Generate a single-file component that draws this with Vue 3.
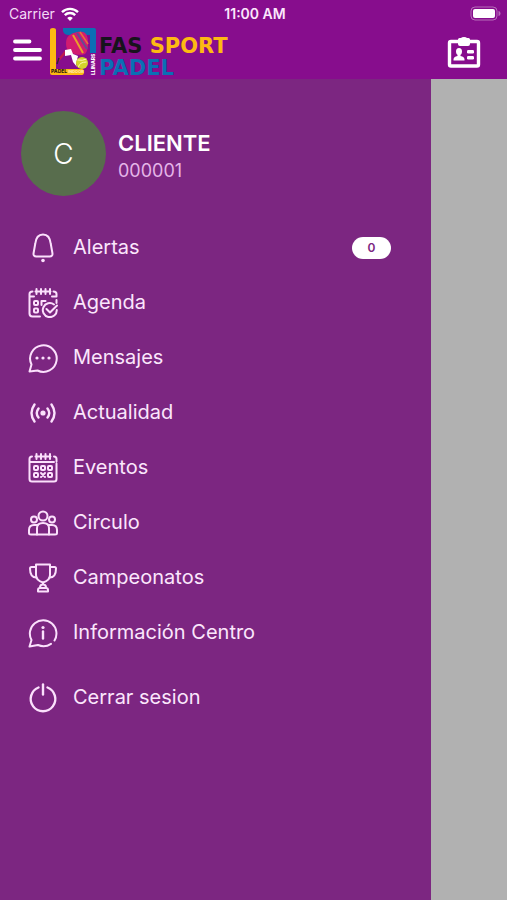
<script setup>
import { ref } from 'vue'

const alerts = ref(0)
const menuOpen = ref(true)

const items = [
  { id: 'alertas', label: 'Alertas' },
  { id: 'agenda', label: 'Agenda' },
  { id: 'mensajes', label: 'Mensajes' },
  { id: 'actualidad', label: 'Actualidad' },
  { id: 'eventos', label: 'Eventos' },
  { id: 'circulo', label: 'Circulo' },
  { id: 'campeonatos', label: 'Campeonatos' },
  { id: 'informacion', label: 'Información Centro' },
  { id: 'salir', label: 'Cerrar sesion' },
]
</script>

<template>
  <div class="app">
    <header class="header">
      <div class="status">
        <div class="carrier">
          <span>Carrier</span>
          <svg width="18" height="14" viewBox="0 0 18 14" fill="none" stroke="#fff" stroke-width="2.4">
            <path d="M1 5.2a11.4 11.4 0 0 1 16 0" />
            <path d="M3.8 8.2a7.4 7.4 0 0 1 10.4 0" />
            <path d="M9 14 6.2 11a4 4 0 0 1 5.6 0z" fill="#fff" stroke="none" />
          </svg>
        </div>
        <span class="clock">11:00 AM</span>
        <div class="battery">
          <svg width="31" height="15" viewBox="0 0 31 15">
            <rect x="1" y="1" width="26" height="13" rx="4" fill="none" stroke="#fff" stroke-opacity=".4" />
            <rect x="3" y="3" width="22" height="9" rx="2" fill="#fff" />
            <path d="M28.5 5v5c1.3-.3 2-1.3 2-2.5s-.7-2.2-2-2.5z" fill="#fff" fill-opacity=".4" />
          </svg>
        </div>
      </div>

      <div class="bar">
        <button class="icon-button menu-button" aria-label="Menu" @click="menuOpen = !menuOpen">
          <svg width="30" height="24" viewBox="0 0 30 24" stroke="#fff" stroke-width="3.8" stroke-linecap="round">
            <path d="M3 3.5H17.5M3 12H28M3 20.5H28" />
          </svg>
        </button>

        <a class="brand" href="#">
          <svg class="emblem" width="48" height="48" viewBox="0 0 48 48">
            <path d="M1 2q0-2 3-2t3 2v39h26q2 0 2 3t-2 3H3q-2 0-2-2z" fill="#fdb913" />
            <path d="M14 0h31q2 0 2 2v23h-6V7H20q-5 0-6-4z" fill="#0b6fb5" />
            <path d="M18 22 8 34" stroke="#bf194e" stroke-width="2.5" />
            <path d="M10 30l-2 6" stroke="#31213d" stroke-width="1.5" />
            <path d="M18 10C21 5 29 3 34 4c4 1 5 6 5 11s-1 9-3 11c-5 2-11 0-14-1-5-2-6-10-4-15z" fill="#d11c70" />
            <path d="M24 7l10 18" stroke="#e8a128" stroke-width="2" fill="none" />
            <path d="M28 5l10 16" stroke="#654c91" stroke-width="2" fill="none" />
            <path d="M31 4l8 12" stroke="#e8703a" stroke-width="1.5" fill="none" />
            <path d="M16 22l6-1 2 5 5 2-2 8 1 3-4-5-2-7-6 1z" fill="#fff" />
            <circle cx="33" cy="35" r="6" fill="#d4d52b" />
            <path d="M28.5 32q5 1 9-1M29.5 39q1-5 8-5" stroke="#fff7b0" fill="none" />
            <text class="emblem-text" x="2" y="45">PADEL</text>
            <text class="emblem-text light" x="19" y="45">INDOOR</text>
            <text class="emblem-text side" transform="translate(46 47) rotate(-90)">LLINARS</text>
          </svg>
          <span class="wordmark">
            <span><span class="fas">FAS</span> <span class="sport">SPORT</span></span>
            <span class="padel">PADEL</span>
          </span>
        </a>

        <button class="icon-button card-button" aria-label="Carnet">
          <svg width="34" height="31" viewBox="0 0 34 31" fill="#fff">
            <rect x="2.5" y="4.5" width="29" height="24.5" rx="1.5" fill="none" stroke="#fff" stroke-width="3.4" />
            <path d="M12.5 1H14q.8-1 3-1t3 1h1.500q1.500 0 1.500 1.500V7q0 2-2 2h-8q-2 0-2-2V2.500Q11 1 12.500 1z" />
            <ellipse cx="12" cy="14.5" rx="3" ry="3.5" />
            <path d="M10.500 16h3v3q4 .5 4 3.500v1H6.500v-1q0-3 4-3.500z" />
            <rect x="20" y="13" width="7" height="3.5" rx="1.2" />
            <rect x="20" y="19" width="7" height="3.5" rx="1.2" />
          </svg>
        </button>
      </div>
    </header>

    <div class="body">
      <aside v-if="menuOpen" class="drawer">
        <div class="profile">
          <div class="avatar">C</div>
          <div class="client">
            <div class="name">CLIENTE</div>
            <div class="number">000001</div>
          </div>
        </div>

        <nav class="menu">
          <a v-for="item in items" :key="item.id" class="item" :class="item.id" href="#">
            <svg class="item-icon" width="30" height="30" viewBox="0 0 30 30">
              <g v-if="item.id === 'alertas'">
                <path d="M15 1.500C9.500 1.500 7.700 6 7.200 11l-1.600 9c-.4 2.500.7 3.500 2.700 3.500h13.400c2 0 3.100-1 2.700-3.500l-1.600-9C22.300 6 20.500 1.500 15 1.500z" />
                <circle class="solid" cx="15" cy="27.5" r="1.8" />
              </g>
              <g v-else-if="item.id === 'agenda'">
                <path d="M12 28.500H4.500q-3 0-3-3V6q0-2.500 3-2.500M25.500 3.500q3 0 3 2.500v2.500M28.500 12v3M1.500 8.500H6M24 8.500h4.500M7.500 3.500h15" />
                <path d="M8.500 1v5M13 1v5M17.500 1v5M22 1v5" />
                <rect x="6" y="13" width="4" height="4" rx="1" />
                <rect x="6" y="20.500" width="4" height="4" rx="1" />
                <path d="M13.500 17v-4h4" />
                <path d="M26 16.500A7 7 0 1 0 28.800 22M18.500 21l3.500 3.500 7-7" />
              </g>
              <g v-else-if="item.id === 'mensajes'">
                <path d="M3.500 21.500A13.300 13.300 0 1 1 9.500 27.500L1.500 28.500z" />
                <circle class="solid" cx="9" cy="15" r="1.6" />
                <circle class="solid" cx="15" cy="15" r="1.6" />
                <circle class="solid" cx="21" cy="15" r="1.6" />
              </g>
              <g v-else-if="item.id === 'actualidad'" class="bold">
                <circle class="solid" cx="15" cy="15" r="2.6" />
                <path d="M10.500 10.500q-3.500 4.500 0 9M19.500 10.500q3.500 4.500 0 9M6.500 6.500q-6 8.500 0 17M23.500 6.500q6 8.500 0 17" />
              </g>
              <g v-else-if="item.id === 'eventos'">
                <path d="M28.500 10.500V26q0 2.500-2.500 2.500H4q-2.500 0-2.500-2.500V6Q1.500 3.500 4 3.500M26 3.500q2.500 0 2.500 2.500v2.500M7.500 3.500h15M1.500 9H26" />
                <path d="M8.500 1v5M13 1v5M17.500 1v5M22 1v5" />
                <rect x="6" y="13" width="4" height="4" rx="1" />
                <rect x="13" y="13" width="4" height="4" rx="1" />
                <rect x="20" y="13" width="4" height="4" rx="1" />
                <rect x="6" y="20" width="4" height="4" rx="1" />
                <path d="M13 20l4 4M17 20l-4 4" />
                <rect x="20" y="20" width="4" height="4" rx="1" />
              </g>
              <g v-else-if="item.id === 'circulo'">
                <circle cx="15" cy="8" r="4.500" />
                <circle cx="6" cy="11.500" r="3" />
                <circle cx="24" cy="11.500" r="3" />
                <path d="M9 26.500V20q0-5 6-5t6 5v6.500" />
                <path d="M9.500 17H6q-5 0-5 5V25q0 1.500 2 1.500h24q2 0 2-1.500v-3q0-5-5-5h-3.500" />
              </g>
              <g v-else-if="item.id === 'campeonatos'">
                <path d="M8 1.500h14V12c0 4-3.500 6.500-7 7.500-3.500-1-7-3.500-7-7.500z" />
                <path d="M8 4H3.500Q2 4 2 5.500c0 5 1 9 6.500 9M22 4h4.500Q28 4 28 5.500c0 5-1 9-6.500 9" />
                <path d="M15 19.500v2M12 24.500q0-3 3-3t3 3M10 28.500v-1.500q0-2 2-2h6q2 0 2 2v1.500z" />
              </g>
              <g v-else-if="item.id === 'informacion'">
                <path d="M23 25.800q-6 4-13 1.200L1.500 28.500l2-6.500A13.300 13.300 0 1 1 26.500 22.500" />
                <circle class="solid" cx="15" cy="9.5" r="1.6" />
                <path class="thick" d="M15 13.500v7" />
              </g>
              <g v-else>
                <path class="thick" d="M10.500 4.500a12.300 12.300 0 1 0 9 0" />
                <path class="thick" d="M15 1.500v10" />
              </g>
            </svg>
            <span class="label">{{ item.label }}</span>
            <span v-if="item.id === 'alertas'" class="badge">{{ alerts }}</span>
          </a>
        </nav>
      </aside>
      <div class="overlay" @click="menuOpen = false"></div>
    </div>
  </div>
</template>

<style>
body {
  margin: 0;
}
</style>

<style scoped>
.app {
  display: flex;
  flex-direction: column;
  min-height: 100vh;
  font-family: Inter, 'Open Sans', sans-serif;
  color: #fbe6fc;
}

.header {
  background: #870d8d;
  color: #fff;
}

.status {
  display: grid;
  grid-template-columns: 1fr auto 1fr;
  align-items: center;
  height: 27px;
  padding: 0 6px 0 9px;
  font-size: 14px;
}

.carrier {
  display: flex;
  align-items: center;
  gap: 6px;
  color: #f3daf5;
}

.clock {
  color: #fbe6fc;
  font-size: 14px;
  font-weight: 600;
}

.battery {
  display: flex;
  justify-content: flex-end;
}

.bar {
  display: flex;
  align-items: center;
  height: 52px;
  padding: 0 26px 2px 12px;
  box-sizing: border-box;
}

.icon-button {
  display: flex;
  padding: 0;
  border: 0;
  background: none;
  cursor: pointer;
}

.menu-button {
  padding-bottom: 4px;
}

.card-button {
  margin-left: auto;
}

.brand {
  display: flex;
  align-items: center;
  gap: 2px;
  margin-left: 7px;
  text-decoration: none;
}

.emblem-text {
  font-size: 5px;
  font-weight: 800;
  fill: #30200c;
}

.emblem-text.light {
  fill: #ffe9a8;
  font-size: 4px;
}

.emblem-text.side {
  fill: #fff;
}

.wordmark {
  display: flex;
  flex-direction: column;
  padding-top: 10px;
  font-family: 'DejaVu Sans', sans-serif;
  font-size: 21px;
  font-weight: 700;
  line-height: 22px;
  white-space: nowrap;
}

.fas {
  color: #17131c;
}

.sport {
  color: #fdb913;
}

.padel {
  color: #0b6fb5;
}

.body {
  display: flex;
  flex: 1;
}

.drawer {
  width: 85%;
  box-sizing: border-box;
  padding: 32px 0 24px;
  background: #7c2681;
}

.overlay {
  flex: 1;
  background: #b1b1b1;
}

.profile {
  display: flex;
  align-items: center;
  gap: 12px;
  padding-left: 21px;
}

.avatar {
  display: flex;
  align-items: center;
  justify-content: center;
  width: 85px;
  height: 85px;
  border-radius: 50%;
  background: #586d4d;
  color: #fff;
  font-size: 28px;
  font-weight: 300;
}

.client {
  padding-top: 7px;
}

.name {
  color: #fff;
  font-size: 22px;
  font-weight: 600;
  line-height: 28px;
}

.number {
  color: #e5b5e8;
  font-size: 18px;
  line-height: 28px;
}

.menu {
  display: flex;
  flex-direction: column;
  margin-top: 24px;
}

.item {
  display: flex;
  align-items: center;
  height: 55px;
  padding: 0 40px 0 28px;
  color: inherit;
  font-size: 20px;
  text-decoration: none;
}

.item.salir {
  margin-top: 10px;
}

.item-icon {
  margin-right: 15px;
  fill: none;
  stroke: #fbe0fc;
  stroke-width: 2;
  stroke-linecap: round;
  stroke-linejoin: round;
}

.label {
  padding-bottom: 1px;
}

.bold,
.thick {
  stroke-width: 2.4;
}

.solid {
  fill: #fbe0fc;
  stroke: none;
}

.badge {
  width: 39px;
  margin-left: auto;
  border-radius: 11px;
  background: #fff;
  color: #7c2681;
  font-size: 12px;
  font-weight: 600;
  line-height: 22px;
  text-align: center;
}
</style>
